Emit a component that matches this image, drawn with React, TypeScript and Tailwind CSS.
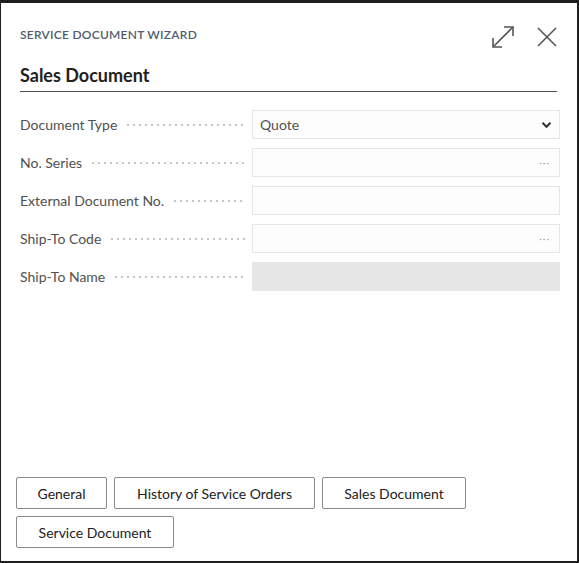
import React from 'react';

const font = { fontFamily: 'Lato, "Noto Sans", sans-serif' };

interface FieldRowProps {
  label: string;
  value?: string;
  kind?: 'select' | 'lookup' | 'text' | 'disabled';
}

const FieldRow: React.FC<FieldRowProps> = ({ label, value, kind = 'text' }) => {
  return (
    <div className="flex items-center h-[29px]">
      <div className="flex items-center w-[232px] h-full">
        <span className="text-[14px] text-[#505050] whitespace-nowrap pr-2">{label}</span>
        <span className="flex-1 h-[4px] mr-[7px] bg-[radial-gradient(circle,#c4c4c4_0.9px,transparent_1.2px)] bg-[length:6px_4px] bg-repeat-x" />
      </div>
      {kind === 'disabled' ? (
        <div className="flex-1 h-full bg-[#e6e6e6]" />
      ) : (
        <div className="flex-1 h-full border border-[#e6e6e6] bg-[#fdfdfd] flex items-center justify-between pl-[7px] pr-[8px]">
          <span className="text-[14px] text-[#505050]">{value}</span>
          {kind === 'select' && (
            <svg width="11" height="8" viewBox="0 0 11 8" className="mr-[-1px]">
              <path d="M1.5 1.8 L5.5 5.8 L9.5 1.8" fill="none" stroke="#333" strokeWidth="2" />
            </svg>
          )}
          {kind === 'lookup' && (
            <span className="text-[10px] text-[#9a9a9a] tracking-[1px] mr-[1px] leading-none pb-[2px]">···</span>
          )}
        </div>
      )}
    </div>
  );
};

const NavButton: React.FC<{ label: string; width: string }> = ({ label, width }) => (
  <button className={`h-[32px] ${width} border border-[#8a8a8a] rounded-[2px] bg-white text-[14px] text-[#212121]`}>
    {label}
  </button>
);

export default function App() {
  return (
    <div
      style={font}
      className="w-[579px] h-[563px] bg-white border-t-[3px] border-l border-r-2 border-b-2 border-[#1e1e1e] flex flex-col"
    >
      {/* header */}
      <div className="flex items-start justify-between pl-[19px] pr-[19px] pt-[22px]">
        <span className="text-[12px] tracking-[0.25px] text-[#505c6d] font-semibold mt-[1px]">SERVICE DOCUMENT WIZARD</span>
        <div className="flex items-center gap-[21px]">
          <svg width="24" height="24" viewBox="0 0 24 24" fill="none" stroke="#555" strokeWidth="1.6">
            <path d="M2 22 L22 2" />
            <path d="M13 2 H22 V11" />
            <path d="M2 13 V22 H11" />
          </svg>
          <svg width="22" height="22" viewBox="0 0 22 22" fill="none" stroke="#555" strokeWidth="1.6">
            <path d="M2 2 L20 20 M20 2 L2 20" />
          </svg>
        </div>
      </div>

      <div className="pl-[19px] pr-5 mt-[13px]">
        <h1 className="text-[18px] font-bold text-[#212121] pb-[2px] border-b border-[#505050]">Sales Document</h1>
      </div>

      {/* fields */}
      <div className="flex flex-col gap-[9px] pl-[19px] pr-[17px] mt-[18px]">
        <FieldRow label="Document Type" value="Quote" kind="select" />
        <FieldRow label="No. Series" kind="lookup" />
        <FieldRow label="External Document No." />
        <FieldRow label="Ship-To Code" kind="lookup" />
        <FieldRow label="Ship-To Name" kind="disabled" />
      </div>

      <div className="flex-1" />

      {/* actions */}
      <div className="flex flex-wrap gap-x-[7px] gap-y-[7px] px-[15px] pb-[13px] w-[520px]">
        <NavButton label="General" width="w-[91px]" />
        <NavButton label="History of Service Orders" width="w-[201px]" />
        <NavButton label="Sales Document" width="w-[144px]" />
        <NavButton label="Service Document" width="w-[158px]" />
      </div>
    </div>
  );
}
